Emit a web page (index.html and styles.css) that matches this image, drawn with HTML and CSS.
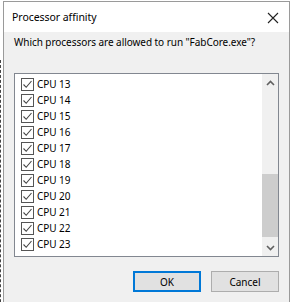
FILE: index.html
```html
<!DOCTYPE html>
<html lang="en">
<head>
    <meta charset="UTF-8">
    <title>Processor affinity</title>
    <link rel="stylesheet" href="styles.css">
</head>
<body>
    <div class="backdrop"></div>
    <div class="dialog">
        <div class="titlebar">
            <span class="title">Processor affinity</span>
            <svg class="close" width="12" height="12" viewBox="0 0 12 12">
                <path d="M1 1 L11 11 M11 1 L1 11" stroke="#222" stroke-width="1.1" fill="none"/>
            </svg>
        </div>
        <div class="content">
            <p class="prompt">Which processors are allowed to run "FabCore.exe"?</p>
            <div class="listbox">
                <ul class="items" id="items"></ul>
                <div class="scrollbar">
                    <div class="arrow">
                        <svg width="9" height="6" viewBox="0 0 9 6"><path d="M1 5 L4.5 1.5 L8 5" stroke="#606060" stroke-width="1.6" fill="none"/></svg>
                    </div>
                    <div class="track">
                        <div class="thumb"></div>
                    </div>
                    <div class="arrow">
                        <svg width="9" height="6" viewBox="0 0 9 6"><path d="M1 1 L4.5 4.5 L8 1" stroke="#606060" stroke-width="1.6" fill="none"/></svg>
                    </div>
                </div>
            </div>
            <div class="buttons">
                <button class="btn default">OK</button>
                <button class="btn">Cancel</button>
            </div>
        </div>
    </div>

    <script>
        const list = document.getElementById('items');
        for (let i = 13; i <= 23; i++) {
            const li = document.createElement('li');
            li.innerHTML = '<span class="check"><svg width="11" height="11" viewBox="0 0 11 11">' +
                '<path d="M1.5 5.5 L4.2 8.3 L9.5 2" stroke="#444" stroke-width="1.1" fill="none"/></svg></span>' +
                '<span>CPU ' + i + '</span>';
            list.appendChild(li);
        }
    </script>
</body>
</html>
```

FILE: styles.css
```css
html, body {
    margin: 0;
    height: 100%;
    overflow: hidden;
}
body {
    display: flex;
    align-items: flex-start;
    background: #ffffff;
    font-family: "Noto Sans", "Open Sans", sans-serif;
    font-size: 10px;
    letter-spacing: -0.05px;
    color: #000;
}
.backdrop {
    width: 2px;
    height: 100%;
    margin-top: 60px;
    border-left: 1px dashed #444;
}
.dialog {
    margin-top: 1px;
    width: 285px;
    height: 320px;
    border: 1px solid #9a9a9a;
    background: #f0f0f0;
}
.titlebar {
    height: 30px;
    background: #ffffff;
    display: flex;
    align-items: center;
    justify-content: space-between;
    padding: 0 10px 0 8px;
}
.title {
    font-size: 10.5px;
    padding-bottom: 1px;
}
.close {
    margin-top: 1px;
}
.content {
    padding: 0 10px;
}
.prompt {
    margin: 2px 0 0 0;
    line-height: 16px;
    white-space: nowrap;
}
.listbox {
    margin-top: 23px;
    height: 182px;
    border: 1px solid #828790;
    background: #ffffff;
    display: flex;
}
.items {
    flex: 1;
    list-style: none;
    margin: 0;
    padding: 2px 0 0 0;
}
.items li {
    height: 16px;
    display: flex;
    align-items: center;
    padding-left: 6px;
}
.check {
    width: 11px;
    height: 11px;
    border: 1px solid #555;
    margin-right: 3px;
    display: flex;
}
.scrollbar {
    width: 16px;
    background: #f0f0f0;
    display: flex;
    flex-direction: column;
}
.arrow {
    height: 17px;
    display: flex;
    align-items: center;
    justify-content: center;
}
.track {
    flex: 1;
    display: flex;
    flex-direction: column;
    justify-content: flex-end;
    padding-bottom: 2px;
}
.thumb {
    height: 63px;
    background: #cdcdcd;
}
.buttons {
    display: flex;
    justify-content: flex-end;
    gap: 10px;
    margin-top: 14px;
}
.btn {
    width: 68px;
    height: 21px;
    padding: 0;
    font-family: inherit;
    font-size: 10px;
    background: #e1e1e1;
    border: 1px solid #adadad;
    color: #000;
}
.btn.default {
    border-color: #0078d7;
    box-shadow: inset 0 0 0 1px #0078d7;
}
```
